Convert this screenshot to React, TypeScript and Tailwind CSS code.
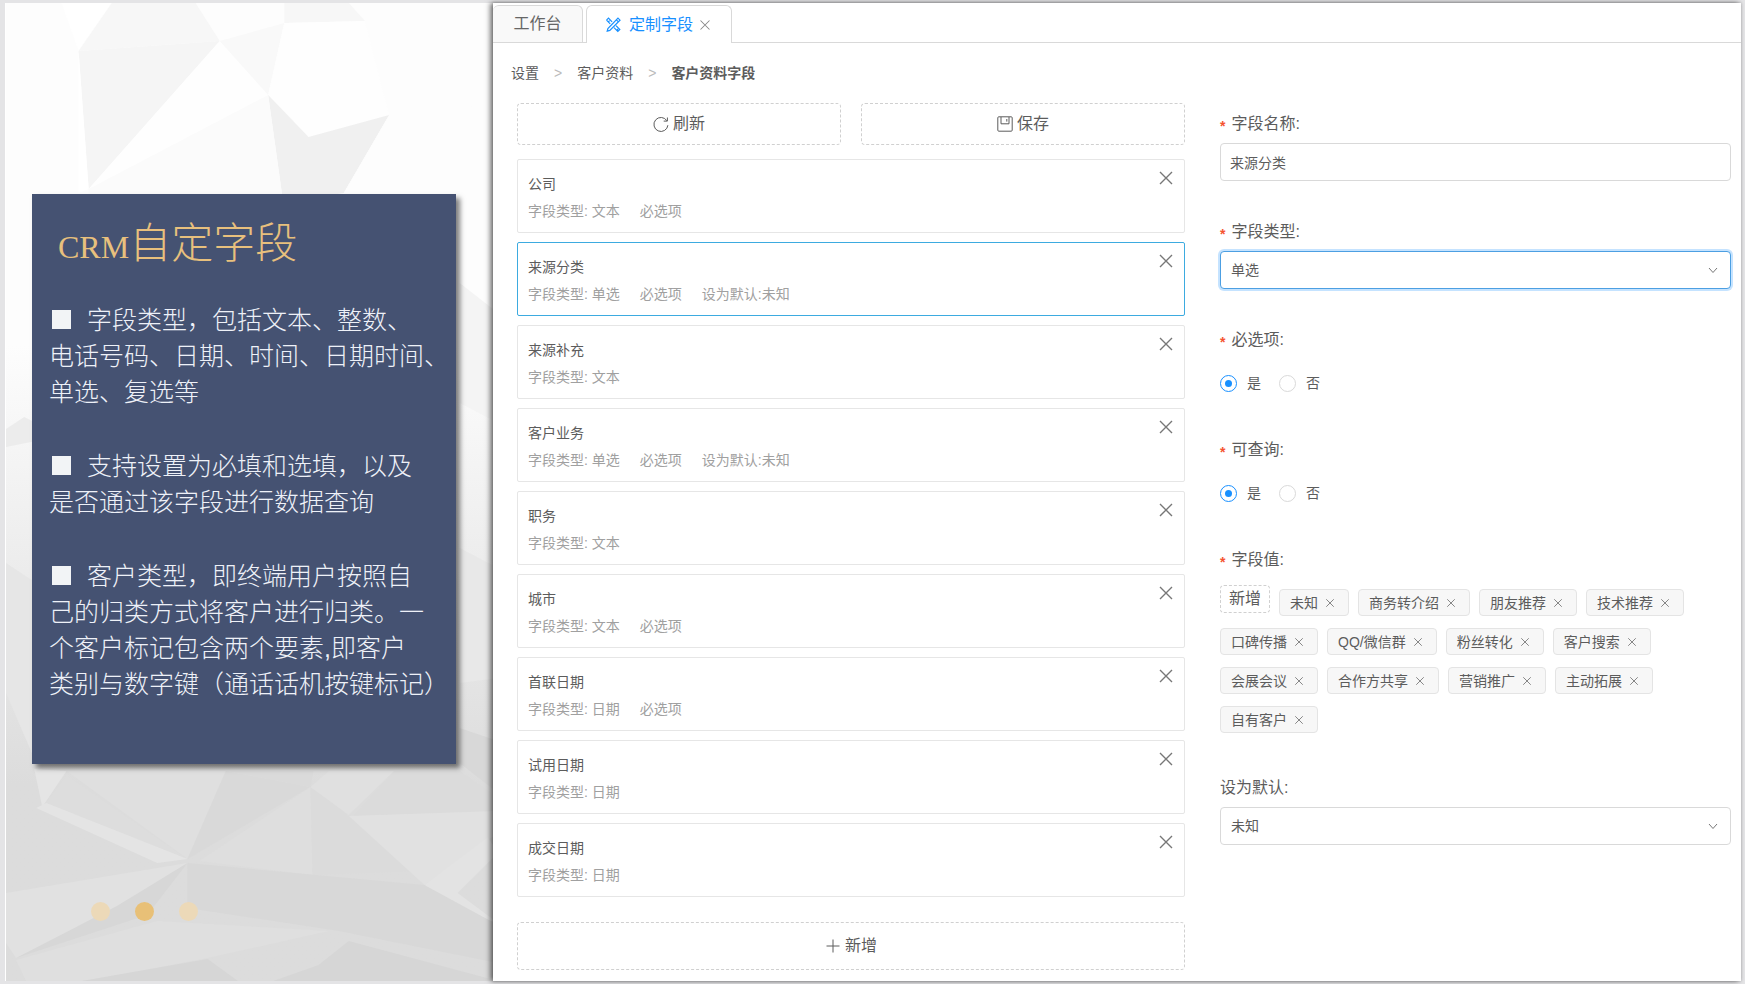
import { useState } from "react";
import type { ReactNode } from "react";

interface FieldItem {
  name: string;
  type: string;
  required?: boolean;
  preset?: string;
}

const FIELDS: FieldItem[] = [
  { name: "公司", type: "文本", required: true },
  { name: "来源分类", type: "单选", required: true, preset: "未知" },
  { name: "来源补充", type: "文本" },
  { name: "客户业务", type: "单选", required: true, preset: "未知" },
  { name: "职务", type: "文本" },
  { name: "城市", type: "文本", required: true },
  { name: "首联日期", type: "日期", required: true },
  { name: "试用日期", type: "日期" },
  { name: "成交日期", type: "日期" },
];

const VALUES = [
  "未知",
  "商务转介绍",
  "朋友推荐",
  "技术推荐",
  "口碑传播",
  "QQ/微信群",
  "粉丝转化",
  "客户搜索",
  "会展会议",
  "合作方共享",
  "营销推广",
  "主动拓展",
  "自有客户",
];

const NOTES = [
  ["字段类型，包括文本、整数、", "电话号码、日期、时间、日期时间、", "单选、复选等"],
  ["支持设置为必填和选填，以及", "是否通过该字段进行数据查询"],
  [
    "客户类型，即终端用户按照自",
    "己的归类方式将客户进行归类。一",
    "个客户标记包含两个要素,即客户",
    "类别与数字键（通话话机按键标记）",
  ],
];

// Low-poly paper texture: points and fill of each facet
const FACETS: [string, string][] = [
  ["55,0 105,0 72,48", "#ffffff"],
  ["105,0 188,0 212,38 72,48", "#f7f7f7"],
  ["72,48 212,38 82,186", "#f5f5f5"],
  ["72,48 82,186 72,190", "#ffffff"],
  ["212,38 260,92 82,186", "#fefefe"],
  ["212,38 276,20 260,92", "#f9f9f9"],
  ["276,0 340,0 356,18 276,20", "#f7f7f7"],
  ["276,20 356,18 380,112 300,134 260,92", "#fefefe"],
  ["260,92 300,134 380,112 335,190 275,200", "#f0f0f0"],
  ["82,186 260,92 275,200 82,200", "#fbfbfb"],
  ["380,112 478,102 488,210 335,190", "#fdfdfd"],
  ["450,280 488,310 488,420 450,400", "#f4f4f4"],
  ["0,426 18,414 30,420 30,438 0,444", "#ececec"],
  ["0,560 30,580 30,760 0,690", "#e6e6e6"],
  ["450,545 488,565 488,675 450,680", "#e8e8e8"],
  ["450,725 488,738 488,790 450,760", "#d8d8d8"],
  ["28,766 60,768 36,804", "#e5e5e5"],
  ["60,768 218,768 180,856", "#dfdfdf"],
  ["218,768 302,784 180,856", "#d9d9d9"],
  ["218,768 305,768 302,784", "#dadada"],
  ["36,804 60,772 180,856", "#dddddd"],
  ["30,805 40,800 180,856 150,860", "#e4e4e4"],
  ["302,784 304,872 192,858", "#dedede"],
  ["302,784 410,868 304,872", "#dbdbdb"],
  ["302,784 320,768 385,768 340,812", "#e0e0e0"],
  ["385,768 450,768 488,795 488,808 345,813", "#dbdbdb"],
  ["340,813 488,808 488,830 415,882", "#e1e1e1"],
  ["415,882 478,834 488,850 448,890 488,920 440,905", "#e3e3e3"],
  ["180,860 415,882 488,922 488,960 330,928 180,905", "#d8d8d8"],
  ["180,860 105,908 10,955 0,940 0,890", "#e1e1e1"],
  ["180,860 110,903 10,955 140,912", "#d7d7d7"],
  ["10,957 150,918 320,928 200,955 80,978 20,978", "#dfdfdf"],
  ["75,978 200,956 230,978", "#d6d6d6"],
  ["265,978 310,962 340,938 488,978", "#d6d6d6"],
];

interface IconProps {
  className?: string;
}

function CloseIcon({ className }: IconProps) {
  return (
    <svg
      viewBox="0 0 16 16"
      className={className}
      fill="none"
      stroke="currentColor"
      strokeWidth="1.4"
      aria-hidden="true"
    >
      <path d="M2 2l12 12M14 2L2 14" />
    </svg>
  );
}

function ToolsIcon({ className }: IconProps) {
  return (
    <svg
      viewBox="0 0 16 16"
      className={className}
      fill="none"
      stroke="currentColor"
      strokeWidth="1.2"
      aria-hidden="true"
    >
      <path d="M13 1.2l2 2L4.8 13.4l-2.6.7.7-2.6zM11.4 2.8l2 2" />
      <path d="M1.5 3.2l2-2 3.6 3.6M1.5 3.2l3.7 3.7M9 10.7l3.8 3.8 2-2L11 8.7M3.6 4.6l1-1M12 13l1-1" />
    </svg>
  );
}

function ReloadIcon({ className }: IconProps) {
  return (
    <svg viewBox="0 0 16 16" className={className} fill="none" stroke="currentColor" aria-hidden="true">
      <path d="M13.9 4.8A7 7 0 1 0 14.9 9.2" />
      <path d="M14.4 1.5v3.6h-3.7" />
    </svg>
  );
}

function SaveIcon({ className }: IconProps) {
  return (
    <svg viewBox="0 0 16 16" className={className} fill="none" stroke="currentColor" aria-hidden="true">
      <rect x="0.8" y="0.8" width="14.4" height="14.4" rx="1" />
      <path d="M4 1v6.8h8V1M9.8 3v2.6" />
    </svg>
  );
}

function PlusIcon({ className }: IconProps) {
  return (
    <svg viewBox="0 0 16 16" className={className} fill="none" stroke="currentColor" aria-hidden="true">
      <path d="M8 1.5v13M1.5 8h13" />
    </svg>
  );
}

function ChevronIcon({ className }: IconProps) {
  return (
    <svg viewBox="0 0 10 10" className={className} fill="none" stroke="currentColor" aria-hidden="true">
      <path d="M1 3l4 4.5L9 3" />
    </svg>
  );
}

function IntroPanel() {
  return (
    <aside className="relative flex w-[493px] shrink-0 flex-col border-l border-white bg-linear-to-b from-[#fdfdfd] from-35% to-[#dcdcdc] to-80%">
      <svg
        className="absolute inset-0 h-full w-full"
        viewBox="0 0 488 978"
        preserveAspectRatio="none"
        aria-hidden="true"
      >
        {FACETS.map(([points, fill]) => (
          <polygon key={points} points={points} fill={fill} />
        ))}
      </svg>
      <section className="relative mt-[191px] mr-[42px] ml-[26px] bg-[#455272] pt-5 pb-[62px] pl-[17px] shadow-[4px_4px_5px_rgba(0,0,0,0.5)]">
        <h1 className="pl-[9px] text-[42px] leading-[60px] font-light text-[#e8c07d]">
          <span className="font-['Liberation_Serif',serif] text-[32px]">CRM</span>
          自定字段
        </h1>
        <div className="mt-[25px] flex flex-col gap-[38px] text-[25px] leading-9 font-light whitespace-nowrap text-[#eef1f8]">
          {NOTES.map((lines) => (
            <p key={lines[0]}>
              <span className="mr-4 ml-[3px] inline-block size-[19px] bg-[#f2f4f6]" />
              {lines.map((line, i) => (
                <span key={line}>
                  {i > 0 && <br />}
                  {line}
                </span>
              ))}
            </p>
          ))}
        </div>
      </section>
      <div className="relative mt-[138px] flex gap-[25px] pl-[85px]">
        <span className="size-[19px] rounded-full bg-[#ecd9b8]" />
        <span className="size-[19px] rounded-full bg-[#e8c077]" />
        <span className="size-[19px] rounded-full bg-[#ecd9b8]" />
      </div>
    </aside>
  );
}

function TabBar() {
  return (
    <nav className="flex h-10 items-stretch pt-0.5 text-base">
      <button className="w-[90px] rounded-t-md border border-l-0 border-[#d9d9d9] bg-[#f9f9f9] text-[#666]">
        工作台
      </button>
      <span className="w-[3px] border-b border-[#d9d9d9]" />
      <div className="flex items-center rounded-t-md border border-b-0 border-[#d9d9d9] pr-5 pl-[18px] text-[#1890ff]">
        <button className="flex items-center gap-2">
          <ToolsIcon className="size-4" />
          定制字段
        </button>
        <button aria-label="关闭" className="ml-1.5 text-[#888]">
          <CloseIcon className="size-3" />
        </button>
      </div>
      <span className="flex-1 border-b border-[#d9d9d9]" />
    </nav>
  );
}

function Breadcrumb() {
  return (
    <nav className="flex h-[60px] items-center gap-[15px] pl-[18px] text-sm text-[#5c5c5c]">
      <a href="#settings">设置</a>
      <span className="text-[#bbb]">&gt;</span>
      <a href="#customer">客户资料</a>
      <span className="text-[#bbb]">&gt;</span>
      <span className="font-bold">客户资料字段</span>
    </nav>
  );
}

interface FieldCardProps {
  item: FieldItem;
  active: boolean;
  onSelect: () => void;
}

function FieldCard({ item, active, onSelect }: FieldCardProps) {
  return (
    <li
      onClick={onSelect}
      className={`flex items-start justify-between rounded-xs border px-2.5 pt-2.5 pb-2 ${
        active ? "border-[#3dabe0]" : "border-[#e6e6e6]"
      }`}
    >
      <div className="text-sm">
        <h2 className="leading-7 text-[#5c5c5c]">{item.name}</h2>
        <p className="flex gap-5 leading-[26px] text-[#a0a0a0]">
          <span>字段类型: {item.type}</span>
          {item.required && <span>必选项</span>}
          {item.preset && <span>设为默认:{item.preset}</span>}
        </p>
      </div>
      <button aria-label={`删除${item.name}`} className="text-[#777]">
        <CloseIcon className="size-4" />
      </button>
    </li>
  );
}

interface FormFieldProps {
  label: string;
  htmlFor?: string;
  required?: boolean;
  children: ReactNode;
}

function FormField({ label, htmlFor, required, children }: FormFieldProps) {
  return (
    <div className="flex flex-col gap-[7px]">
      <label htmlFor={htmlFor} className="flex items-center gap-1.5 text-base leading-6 text-[#5c5c5c]">
        {required && <span className="pt-1 text-sm font-bold text-[#f5532f]">*</span>}
        {label}:
      </label>
      {children}
    </div>
  );
}

interface SelectBoxProps {
  id: string;
  options: string[];
  value: string;
  onChange: (value: string) => void;
  focused?: boolean;
}

function SelectBox({ id, options, value, onChange, focused }: SelectBoxProps) {
  return (
    <div className="relative">
      <select
        id={id}
        value={value}
        onChange={(e) => onChange(e.target.value)}
        className={`block h-[38px] w-full appearance-none rounded-sm border bg-white px-2.5 text-sm text-[#5c5c5c] outline-none ${
          focused ? "border-[#4c9fe2] shadow-[0_0_0_2px_rgba(24,144,255,0.25)]" : "border-[#d9d9d9]"
        }`}
      >
        {options.map((o) => (
          <option key={o}>{o}</option>
        ))}
      </select>
      <ChevronIcon className="pointer-events-none absolute top-[14px] right-[13px] size-2.5 text-[#777]" />
    </div>
  );
}

function YesNo({ name }: { name: string }) {
  return (
    <div className="flex h-10 items-center gap-[18px] pt-2 text-sm text-[#5c5c5c]">
      {["是", "否"].map((text, i) => (
        <label key={text} className="flex items-center gap-2.5">
          <input
            type="radio"
            name={name}
            defaultChecked={i === 0}
            className="grid size-[17px] appearance-none place-content-center rounded-full border border-[#d9d9d9] bg-white checked:border-[#1890ff] checked:before:size-[7px] checked:before:rounded-full checked:before:bg-[#1890ff] checked:before:content-['']"
          />
          {text}
        </label>
      ))}
    </div>
  );
}

export default function App() {
  const [selected, setSelected] = useState("来源分类");
  const [fieldName, setFieldName] = useState("来源分类");
  const [fieldType, setFieldType] = useState("单选");
  const [preset, setPreset] = useState("未知");
  const [values, setValues] = useState(VALUES);

  const dashed =
    "flex items-center justify-center gap-1 rounded-sm border border-dashed border-[#d0d0d0] text-base text-[#5c5c5c]";

  return (
    <div className="flex min-h-screen bg-[#e4e4e6] pt-[3px] pr-1 pb-[3px] pl-[5px] font-['Liberation_Sans','Noto_Sans_CJK_SC',sans-serif]">
      <IntroPanel />
      <main className="relative -ml-[5px] flex-1 bg-white shadow-[-3px_0_5px_rgba(0,0,0,0.5),0_0_3px_rgba(0,0,0,0.25)]">
        <TabBar />
        <Breadcrumb />
        <div className="grid grid-cols-[17fr_13fr] gap-[35px] pr-2.5 pb-[11px] pl-6">
          <div className="flex flex-col">
            <div className="grid grid-cols-2 gap-5">
              <button className={`${dashed} h-[42px]`}>
                <ReloadIcon className="size-4" />
                刷新
              </button>
              <button className={`${dashed} h-[42px]`}>
                <SaveIcon className="size-4" />
                保存
              </button>
            </div>
            <ul className="mt-[14px] flex flex-col gap-[9px]">
              {FIELDS.map((item) => (
                <FieldCard
                  key={item.name}
                  item={item}
                  active={item.name === selected}
                  onSelect={() => setSelected(item.name)}
                />
              ))}
            </ul>
            <button className={`${dashed} mt-[25px] h-12`}>
              <PlusIcon className="size-4" />
              新增
            </button>
          </div>

          <form className="flex flex-col gap-[39px] pt-[9px]">
            <FormField label="字段名称" htmlFor="field-name" required>
              <input
                id="field-name"
                type="text"
                value={fieldName}
                onChange={(e) => setFieldName(e.target.value)}
                className="h-[38px] rounded-sm border border-[#d9d9d9] px-[9px] text-sm text-[#5c5c5c] outline-none"
              />
            </FormField>
            <FormField label="字段类型" htmlFor="field-type" required>
              <SelectBox
                id="field-type"
                options={["文本", "整数", "电话号码", "日期", "时间", "日期时间", "单选", "复选"]}
                value={fieldType}
                onChange={setFieldType}
                focused
              />
            </FormField>
            <FormField label="必选项" required>
              <YesNo name="required" />
            </FormField>
            <FormField label="可查询" required>
              <YesNo name="searchable" />
            </FormField>
            <FormField label="字段值" required>
              <div className="flex flex-wrap items-end gap-x-[9px] gap-y-3 pt-1.5 pb-1">
                <button type="button" className={`${dashed} mb-[3px] h-7 px-2`}>
                  新增
                </button>
                {values.map((v) => (
                  <span
                    key={v}
                    className="flex h-[27px] items-center gap-1 rounded-sm border border-[#e4e4e4] bg-[#f7f7f7] px-2.5 text-sm text-[#5c5c5c]"
                  >
                    {v}
                    <button
                      type="button"
                      aria-label={`移除${v}`}
                      onClick={() => setValues(values.filter((x) => x !== v))}
                      className="px-[3px] text-[#777]"
                    >
                      <CloseIcon className="size-2.5" />
                    </button>
                  </span>
                ))}
              </div>
            </FormField>
            <FormField label="设为默认" htmlFor="field-default">
              <SelectBox id="field-default" options={values} value={preset} onChange={setPreset} />
            </FormField>
          </form>
        </div>
      </main>
    </div>
  );
}
